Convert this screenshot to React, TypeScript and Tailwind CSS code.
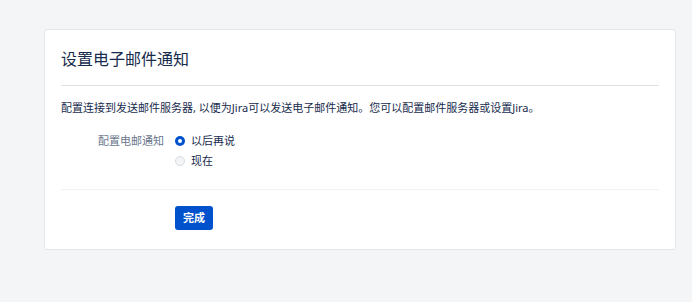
import React from 'react';

const font = { fontFamily: '"Noto Sans", "Noto Sans CJK SC", sans-serif' };

function Radio({ checked, label }: { checked?: boolean; label: string }) {
  return (
    <label className="flex items-center h-5 gap-[6px] text-[11px] text-[#172b4d]">
      {checked ? (
        <span className="w-[10px] h-[10px] rounded-full bg-[#0052cc] flex items-center justify-center">
          <span className="w-1 h-1 rounded-full bg-white" />
        </span>
      ) : (
        <span className="w-[10px] h-[10px] rounded-full bg-[#f4f5f7] border border-[#d8dbe1]" />
      )}
      {label}
    </label>
  );
}

export default function App() {
  return (
    <div className="min-h-screen bg-[#f4f5f7] pt-[29px] pl-[44px]" style={font}>
      <div className="w-[632px] bg-white border border-[#e4e6ea] rounded-[3px] px-4 pb-[19px]">
        <div className="pt-[18px] pb-[15px] border-b border-[#dfe1e6]">
          <h1 className="text-[16px] leading-[22px] text-[#172b4d]">设置电子邮件通知</h1>
        </div>
        <p className="pt-[14px] text-[11px] leading-4 text-[#172b4d]">
          配置连接到发送邮件服务器, 以便为Jira可以发送电子邮件通知。您可以配置邮件服务器或设置Jira。
        </p>
        <div className="flex mt-[15px] pb-[18px] border-b border-[#f1f2f4]">
          <div className="w-[103px] text-right text-[11px] leading-5 text-[#6b778c]">配置电邮通知</div>
          <div className="ml-[11px] flex flex-col">
            <Radio checked label="以后再说" />
            <Radio label="现在" />
          </div>
        </div>
        <div className="pt-[14px] pl-[114px]">
          <button className="h-6 px-2 rounded-[3px] bg-[#0052cc] text-white text-[11px] font-bold">
            完成
          </button>
        </div>
      </div>
    </div>
  );
}
